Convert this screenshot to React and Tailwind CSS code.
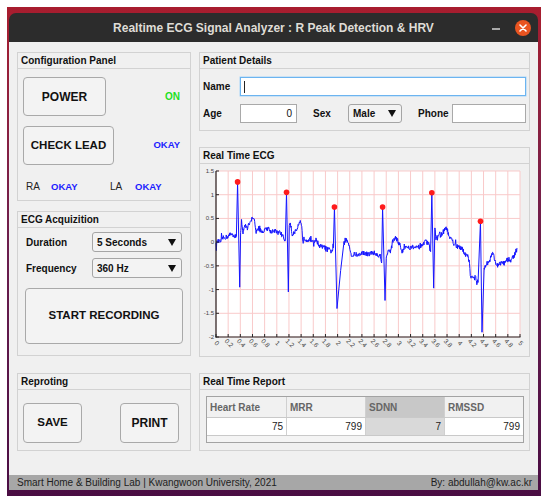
// ECG analyzer window, drawn inside a desktop frame
const anchors = [
  [0, -0.05], [0.03, 0.02], [0.06, 0.0], [0.1, 0.08], [0.15, 0.1], [0.2, 0.12], [0.25, 0.18], [0.3, 0.14], [0.335, 0.12],
  [0.355, 1.27], [0.39, -0.95], [0.405, 0.2],
  [0.42, 0.45], [0.44, 0.2], [0.47, 0.35], [0.52, 0.3], [0.56, 0.45], [0.6, 0.5], [0.63, 0.45], [0.66, 0.2], [0.7, 0.3],
  [0.75, 0.22], [0.8, 0.25], [0.86, 0.3], [0.9, 0.22], [0.95, 0.25], [1.0, 0.2], [1.05, 0.2], [1.1, 0.15], [1.14, 0.03],
  [1.16, 1.05], [1.19, -1.05], [1.205, 0.3],
  [1.22, 0.45], [1.25, 0.15], [1.3, 0.25], [1.35, 0.32], [1.39, 0.42], [1.41, 0.3], [1.43, 0.0], [1.45, 0.08], [1.5, 0.05],
  [1.55, 0.05], [1.6, 0.0], [1.65, 0.05], [1.7, -0.08], [1.75, -0.1], [1.8, -0.12], [1.85, -0.15], [1.9, -0.2], [1.93, -0.12],
  [1.948, 0.74], [1.99, -1.4],
  [2.05, -0.6], [2.1, -0.05], [2.13, 0.05], [2.17, 0.0], [2.2, -0.1], [2.23, -0.3], [2.28, -0.25], [2.35, -0.28], [2.4, -0.22],
  [2.5, -0.25], [2.6, -0.22], [2.65, -0.28], [2.7, -0.3], [2.725, -0.4],
  [2.74, 0.74], [2.78, -1.23], [2.8, -0.35],
  [2.83, -0.15], [2.87, -0.2], [2.9, 0.0], [2.95, 0.1], [2.98, 0.05], [3.02, -0.05], [3.06, -0.2], [3.1, -0.1], [3.2, -0.1],
  [3.3, -0.12], [3.4, -0.08], [3.45, 0.02], [3.5, -0.05], [3.53, -0.2],
  [3.55, 1.04], [3.58, -0.97], [3.6, 0.3],
  [3.62, 0.05], [3.66, 0.2], [3.7, 0.15], [3.75, 0.25], [3.8, 0.3], [3.83, 0.1], [3.88, 0.05], [3.92, -0.05], [3.98, -0.1],
  [4.05, -0.15], [4.1, -0.25], [4.14, -0.3], [4.17, -0.45], [4.19, -0.8], [4.22, -0.7], [4.27, -0.75], [4.31, -0.85],
  [4.35, 0.44], [4.375, -1.9], [4.41, -0.55],
  [4.45, -0.45], [4.5, -0.4], [4.55, -0.2], [4.6, -0.45], [4.65, -0.5], [4.7, -0.42], [4.75, -0.45], [4.8, -0.35],
  [4.85, -0.38], [4.9, -0.3], [4.95, -0.15],
];

const qrs = [[0.335, 0.405], [1.14, 1.205], [1.93, 2.1], [2.725, 2.8], [3.53, 3.6], [4.31, 4.41]];
const peaks = [[0.355, 1.27], [1.16, 1.05], [1.948, 0.74], [2.74, 0.74], [3.55, 1.04], [4.35, 0.44]];

function interp(t) {
  for (let i = 1; i < anchors.length; i++) {
    const [t0, v0] = anchors[i - 1];
    const [t1, v1] = anchors[i];
    if (t <= t1) return v0 + ((t - t0) / (t1 - t0)) * (v1 - v0);
  }
  return anchors[anchors.length - 1][1];
}

function buildSignal() {
  let seed = 12345;
  const rand = () => (seed = (seed * 16807) % 2147483647) / 2147483647;
  const pts = [];
  for (let t = 0; t <= 4.95; t += 0.006) {
    if (qrs.some(([a, b]) => t > a && t < b)) continue;
    const spike = rand() > 0.93 ? (rand() - 0.5) * 0.2 : 0;
    pts.push([t, interp(t) + (rand() - 0.5) * 0.1 + spike]);
  }
  anchors.forEach(([t, v]) => {
    if (qrs.some(([a, b]) => t >= a && t <= b)) pts.push([t, v]);
  });
  return pts.sort((p, q) => p[0] - q[0]);
}

const sx = (t) => 16 + t * 60.8;
const sy = (v) => 173 - (v + 2) * 47.43;

function EcgChart() {
  const sig = buildSignal();
  const xt = Array.from({ length: 26 }, (_, i) => i * 0.2);
  const yt = [-2, -1.5, -1, -0.5, 0, 0.5, 1, 1.5];
  const fmt = (n) => String(Math.round(n * 10) / 10);
  return (
    <svg width="329" height="192" className="block">
      <rect x="16" y="7" width="304" height="166" fill="#ffffff" />
      {xt.map((t) => (
        <line key={"gx" + t} x1={sx(t)} x2={sx(t)} y1="7" y2="173" stroke="#f9caca" strokeWidth="1" />
      ))}
      {yt.map((v) => (
        <line key={"gy" + v} x1="16" x2="320" y1={sy(v)} y2={sy(v)} stroke="#f9caca" strokeWidth="1" />
      ))}
      <polyline
        points={sig.map(([t, v]) => `${sx(t).toFixed(2)},${sy(v).toFixed(2)}`).join(" ")}
        fill="none"
        stroke="#1414ff"
        strokeWidth="1"
        strokeLinejoin="round"
      />
      {peaks.map(([t, v]) => (
        <circle key={"p" + t} cx={sx(t)} cy={sy(v)} r="2.8" fill="#ff1b1b" />
      ))}
      <line x1="16" x2="16" y1="7" y2="173.5" stroke="#262626" strokeWidth="1.2" />
      <line x1="15.5" x2="320.5" y1="173" y2="173" stroke="#262626" strokeWidth="1.2" />
      {xt.map((t) => (
        <line key={"tx" + t} x1={sx(t)} x2={sx(t)} y1="170" y2="173" stroke="#262626" strokeWidth="1" />
      ))}
      {yt.map((v) => (
        <line key={"ty" + v} x1="16" x2="19" y1={sy(v)} y2={sy(v)} stroke="#262626" strokeWidth="1" />
      ))}
      {yt.map((v) => (
        <text key={"ly" + v} x="14" y={sy(v) + 2} fontSize="6" textAnchor="end" fill="#444" fontFamily="Liberation Sans, Arial, sans-serif">
          {fmt(v)}
        </text>
      ))}
      {xt.map((t) => (
        <text
          key={"lx" + t}
          x={sx(t)}
          y="181"
          fontSize="6.5"
          textAnchor="middle"
          fill="#444"
          fontFamily="Liberation Sans, Arial, sans-serif"
          transform={`rotate(45 ${sx(t)} 180)`}
        >
          {fmt(t)}
        </text>
      ))}
    </svg>
  );
}

function Panel({ title, className, children }) {
  return (
    <div className={`flex flex-col border border-[#d2d2d2] bg-[#f0f0f0] ${className}`}>
      <div className="h-[16px] shrink-0 border-b border-[#d2d2d2] px-[3px] text-[10px] font-bold leading-[15px] text-[#111]">
        {title}
      </div>
      {children}
    </div>
  );
}

function Arrow() {
  return (
    <svg width="8" height="7" viewBox="0 0 8 7">
      <polygon points="0,0 8,0 4,7" fill="#111" />
    </svg>
  );
}

function Select({ label, className }) {
  return (
    <div className={`flex items-center justify-between rounded-[3px] border border-[#a5a5a5] bg-[#f3f3f3] pl-[4px] pr-[5px] text-[10px] font-bold text-[#111] ${className}`}>
      <span>{label}</span>
      <Arrow />
    </div>
  );
}

const btn = "flex items-center justify-center rounded-[4px] border border-[#a9a9a9] bg-[#f3f3f3] font-bold text-[#111]";

export default function App() {
  return (
    <div className="h-[504px] w-[550px] bg-white pl-[7px] pt-[7px] font-['Liberation_Sans',Arial,sans-serif]">
      <div className="h-[489px] w-[534px] bg-gradient-to-b from-[#a81d2e] via-[#6a1d4d] to-[#4a0d43] pl-[2px] pt-[6px]">
        <div className="flex h-[477px] w-[529px] flex-col">
          {/* title bar */}
          <div className="relative flex h-[29px] shrink-0 items-center justify-center rounded-t-[7px] bg-[#2c2c2c]">
            <span className="text-[12px] font-bold text-[#dfdcd6]">
              Realtime ECG Signal Analyzer : R Peak Detection &amp; HRV
            </span>
            <div className="absolute right-[38px] top-[15px] h-[1.5px] w-[8px] bg-[#a9a9a9]" />
            <div className="absolute right-[7px] top-[7px] flex h-[16px] w-[16px] items-center justify-center rounded-full bg-[#e95420]">
              <svg width="8" height="8" viewBox="0 0 8 8">
                <path d="M1 1L7 7M7 1L1 7" stroke="#fff" strokeWidth="1.6" strokeLinecap="round" />
              </svg>
            </div>
          </div>

          {/* body */}
          <div className="flex flex-1 gap-[8px] bg-[#f0f0f0] px-[8px] pt-[10px]">
            <div className="flex w-[174px] flex-col">
              <Panel title="Configuration Panel" className="h-[149px]">
                <div className="flex flex-col pl-[5px] pr-[10px] pt-[8px]">
                  <div className="flex items-center justify-between">
                    <div className={`${btn} h-[39px] w-[83px] text-[12px]`}>POWER</div>
                    <span className="text-[10px] font-bold text-[#1ee01e]">ON</span>
                  </div>
                  <div className="mt-[10px] flex items-center justify-between">
                    <div className={`${btn} h-[39px] w-[91px] text-[11.5px]`}>CHECK LEAD</div>
                    <span className="text-[9.5px] font-bold text-[#1d1dff]">OKAY</span>
                  </div>
                  <div className="mt-[16px] flex items-center text-[10px] leading-[12px]">
                    <span className="w-[28px] pl-[3px] text-[#222]">RA</span>
                    <span className="w-[59px] text-[9.5px] font-bold text-[#1d1dff]">OKAY</span>
                    <span className="w-[25px] text-[#222]">LA</span>
                    <span className="text-[9.5px] font-bold text-[#1d1dff]">OKAY</span>
                  </div>
                </div>
              </Panel>

              <Panel title="ECG Acquizition" className="mt-[10px] h-[145px]">
                <div className="flex flex-col px-[7px] pt-[4px]">
                  <div className="flex items-center">
                    <span className="w-[67px] pl-[1px] text-[10px] font-bold text-[#111]">Duration</span>
                    <Select label="5 Seconds" className="h-[20px] w-[90px]" />
                  </div>
                  <div className="mt-[6px] flex items-center">
                    <span className="w-[67px] pl-[1px] text-[10px] font-bold text-[#111]">Frequency</span>
                    <Select label="360 Hz" className="h-[20px] w-[90px]" />
                  </div>
                  <div className={`${btn} mt-[10px] h-[56px] w-[158px] text-[11.5px]`}>START RECORDING</div>
                </div>
              </Panel>

              <Panel title="Reproting" className="mt-[17px] h-[78px]">
                <div className="flex gap-[38px] pl-[5px] pt-[13px]">
                  <div className={`${btn} h-[40px] w-[59px] text-[11.5px]`}>SAVE</div>
                  <div className={`${btn} h-[40px] w-[59px] text-[12px]`}>PRINT</div>
                </div>
              </Panel>
            </div>

            <div className="flex w-[331px] flex-col">
              <Panel title="Patient Details" className="h-[79px]">
                <div className="flex flex-col pl-[3px] pr-[3px] pt-[8px] text-[10px] font-bold text-[#111]">
                  <div className="flex items-center">
                    <span className="w-[37px]">Name</span>
                    <div className="flex h-[19px] flex-1 items-center border border-[#6cb4f0] bg-white pl-[3px] shadow-[0_0_0_0.5px_#a6d3f7]">
                      <div className="h-[12px] w-px bg-[#222]" />
                    </div>
                  </div>
                  <div className="mt-[8px] flex items-center">
                    <span className="w-[37px]">Age</span>
                    <div className="flex h-[19px] w-[57px] items-center justify-end border border-[#a9a9a9] bg-white pr-[4px] font-normal">
                      0
                    </div>
                    <span className="ml-[16px] w-[35px]">Sex</span>
                    <Select label="Male" className="h-[19px] w-[54px]" />
                    <span className="ml-[16px] w-[34px]">Phone</span>
                    <div className="h-[19px] flex-1 border border-[#a9a9a9] bg-white" />
                  </div>
                </div>
              </Panel>

              <Panel title="Real Time ECG" className="mt-[16px] h-[210px]">
                <EcgChart />
              </Panel>

              <Panel title="Real Time Report" className="mt-[16px] h-[78px]">
                <div className="pl-[6px] pt-[6px]">
                  <div className="w-[318px] border border-[#a3a3a3] bg-[#f4f4f4] text-[10px]">
                    <div className="flex h-[21px] border-b border-[#c9c9c9] font-bold text-[#666]">
                      <div className="flex w-[80px] items-center border-r border-[#d0d0d0] bg-[#f1f1f1] pl-[3px]">Heart Rate</div>
                      <div className="flex w-[79px] items-center border-r border-[#d0d0d0] bg-[#f1f1f1] pl-[3px]">MRR</div>
                      <div className="flex w-[79px] items-center border-r border-[#d0d0d0] bg-[#c8c8c8] pl-[3px]">SDNN</div>
                      <div className="flex flex-1 items-center bg-[#f1f1f1] pl-[3px]">RMSSD</div>
                    </div>
                    <div className="flex h-[18px] border-b border-[#c9c9c9] text-[#222]">
                      <div className="flex w-[80px] items-center justify-end border-r border-[#d0d0d0] bg-white pr-[3px]">75</div>
                      <div className="flex w-[79px] items-center justify-end border-r border-[#d0d0d0] bg-white pr-[3px]">799</div>
                      <div className="flex w-[79px] items-center justify-end border-r border-[#d0d0d0] bg-[#d9d9d9] pr-[3px]">7</div>
                      <div className="flex flex-1 items-center justify-end bg-white pr-[3px]">799</div>
                    </div>
                    <div className="h-[6px]" />
                  </div>
                </div>
              </Panel>
            </div>
          </div>

          {/* status bar */}
          <div className="flex h-[15px] shrink-0 items-center justify-between bg-[#a7a7a7] pl-[8px] pr-[6px] text-[10px] text-[#1e1e1e]">
            <span>Smart Home &amp; Building Lab | Kwangwoon University, 2021</span>
            <span>By: abdullah@kw.ac.kr</span>
          </div>
        </div>
      </div>
    </div>
  );
}
